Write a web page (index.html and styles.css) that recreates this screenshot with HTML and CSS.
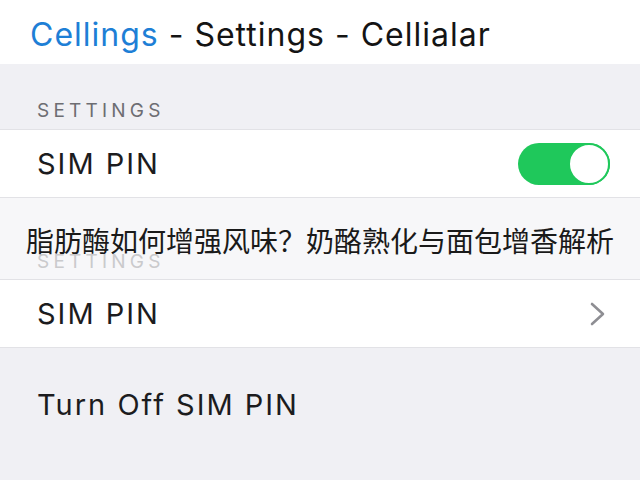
FILE: index.html
```html
<!DOCTYPE html>
<html lang="en">
  <head>
    <meta charset="UTF-8" />
    <meta name="viewport" content="width=device-width, initial-scale=1" />
    <title>SIM PIN</title>
    <link rel="stylesheet" href="styles.css">
  </head>
  <body>
    <header class="nav">
      <span class="nav-back">Cellings</span>
      <span class="nav-title">- Settings - Cellialar</span>
    </header>

    <div class="section-label">SETTINGS</div>
    <div class="row">
      <span class="row-text">SIM PIN</span>
      <span class="toggle on"><span class="knob"></span></span>
    </div>

    <div class="caption-band">
      <div class="section-label faded">SETTINGS</div>
      <p class="caption">脂肪酶如何增强风味？奶酪熟化与面包增香解析</p>
    </div>
    <div class="row">
      <span class="row-text">SIM PIN</span>
      <svg class="chevron" width="20" height="26" viewBox="0 0 20 26">
        <path d="M4 3 L15 13 L4 23" fill="none" stroke="#8e8e93" stroke-width="2.6" stroke-linecap="round" stroke-linejoin="round" />
      </svg>
    </div>

    <div class="plain-row">Turn Off SIM PIN</div>
  </body>
</html>
```

FILE: styles.css
```css
* {
  box-sizing: border-box;
}
body {
  margin: 0;
  width: 640px;
  height: 480px;
  overflow: hidden;
  background: #f0f0f4;
  font-family: Inter, "Liberation Sans", sans-serif;
  color: #1c1c1e;
}
.nav {
  height: 64px;
  background: #fff;
  padding: 15px 0 0 30px;
  font-size: 32px;
  letter-spacing: 1px;
  white-space: nowrap;
}
.nav-back {
  color: #1e7fd6;
}
.nav-title {
  color: #141414;
}
.section-label {
  padding: 35px 0 0 37px;
  height: 66px;
  font-size: 19px;
  letter-spacing: 4.2px;
  color: #6d6d72;
  border-bottom: 1px solid #e2e2e6;
}
.row {
  height: 68px;
  background: #fff;
  border-bottom: 1px solid #e2e2e6;
  display: flex;
  align-items: center;
  justify-content: space-between;
  padding: 0 30px 0 37px;
}
.row-text {
  font-size: 29px;
  letter-spacing: 2px;
}
.toggle {
  width: 92px;
  height: 42px;
  border-radius: 21px;
  background: #1fc85b;
  display: flex;
  align-items: center;
  justify-content: flex-end;
}
.knob {
  width: 42px;
  height: 42px;
  border-radius: 50%;
  background: #fff;
  border: 2px solid #1fc85b;
}
.chevron {
  margin-right: 2px;
}
.caption-band {
  position: relative;
  height: 82px;
  background: #f7f7f9;
  border-bottom: 1px solid #e2e2e6;
}
.section-label.faded {
  padding-top: 52px;
  height: auto;
  color: #cacacc;
  border-bottom: none;
}
.caption {
  position: absolute;
  left: 0;
  right: 0;
  top: 22px;
  margin: 0;
  text-align: center;
  white-space: nowrap;
  font-family: "Noto Sans CJK SC", sans-serif;
  font-size: 28px;
  line-height: 40px;
  color: #1a1a1a;
}
.plain-row {
  padding: 39px 0 0 37px;
  font-size: 29px;
  letter-spacing: 2px;
}
```
